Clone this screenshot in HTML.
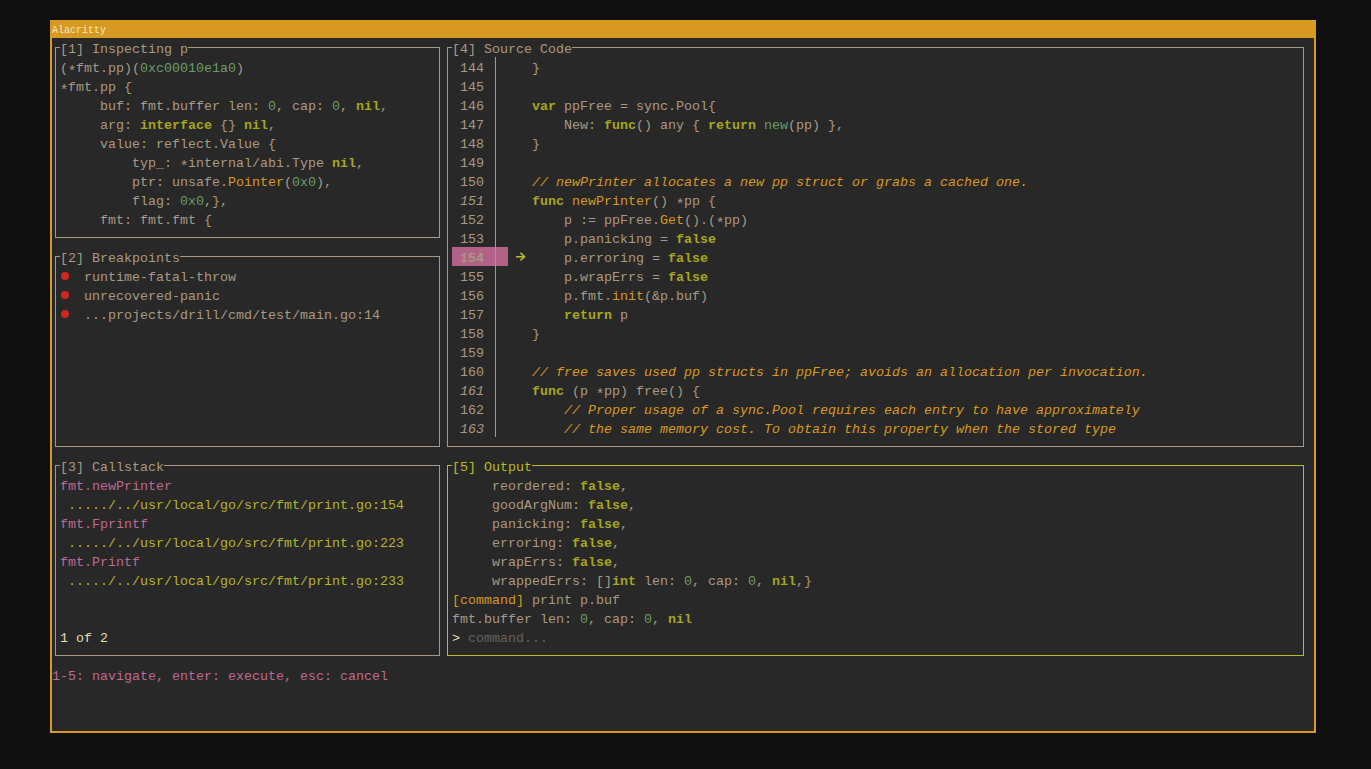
<!DOCTYPE html>
<html><head><meta charset="utf-8"><style>
html,body{margin:0;padding:0;}
body{width:1371px;height:769px;background:#0f0f0f;position:relative;overflow:hidden;font-family:"Liberation Mono",monospace;}
#win{position:absolute;left:50px;top:20px;width:1266px;height:713px;background:#d79921;}
#title{position:absolute;left:52px;top:21px;width:1262px;height:16px;background:#d79921;}
#tt{position:absolute;left:52px;top:24px;height:12px;line-height:12px;font-size:10px;color:#f3e6c6;white-space:pre;transform:scaleY(1.1);transform-origin:0 0;}
#content{position:absolute;left:52px;top:38px;width:1262px;height:693px;background:#282828;}
.dot{position:absolute;width:8px;height:8px;border-radius:50%;background:#d1261f;}
.bl,.yl,.hlb{position:absolute;}
.bl{background:#a89984;}
.yl{background:#b8bb26;}
.hlb{background:#b16286;}
span{position:absolute;white-space:pre;font-size:13.333px;line-height:19px;height:17px;}
.f{color:#a89984;}
.bt{color:#a89984;background:#282828;}
.yt{color:#b8bb26;background:#282828;}
.g{color:#689d6a;}
.k{color:#a6a51c;font-weight:bold;}
.o{color:#d79921;}
.c{color:#d79921;font-style:italic;}
.r{color:#cc241d;}
.p{color:#bd6a92;}
.y{color:#b4b528;}
.w{color:#ebdbb2;}
.gr{color:#646260;}
.ln{color:#a89984;}
.lni{color:#a89984;font-style:italic;}
.lnh{color:#a89984;font-weight:bold;background:transparent;}
.ar{color:#b8bb26;}
.ast{display:inline-block;width:8px;font-weight:inherit;transform:translateY(3px) scale(1.15);}

</style></head><body>
<div id="win"></div><div id="title"></div><div id="tt">Alacritty</div><div id="content"></div>
<div class="bl" style="left:55px;top:47px;width:385px;height:1px"></div><div class="bl" style="left:55px;top:237px;width:385px;height:1px"></div><div class="bl" style="left:55px;top:47px;width:1px;height:191px"></div><div class="bl" style="left:439px;top:47px;width:1px;height:191px"></div><div class="bl" style="left:55px;top:256px;width:385px;height:1px"></div><div class="bl" style="left:55px;top:446px;width:385px;height:1px"></div><div class="bl" style="left:55px;top:256px;width:1px;height:191px"></div><div class="bl" style="left:439px;top:256px;width:1px;height:191px"></div><div class="bl" style="left:55px;top:465px;width:385px;height:1px"></div><div class="bl" style="left:55px;top:655px;width:385px;height:1px"></div><div class="bl" style="left:55px;top:465px;width:1px;height:191px"></div><div class="bl" style="left:439px;top:465px;width:1px;height:191px"></div><div class="bl" style="left:447px;top:47px;width:857px;height:1px"></div><div class="bl" style="left:447px;top:446px;width:857px;height:1px"></div><div class="bl" style="left:447px;top:47px;width:1px;height:400px"></div><div class="bl" style="left:1303px;top:47px;width:1px;height:400px"></div><div class="yl" style="left:447px;top:465px;width:857px;height:1px"></div><div class="yl" style="left:447px;top:655px;width:857px;height:1px"></div><div class="yl" style="left:447px;top:465px;width:1px;height:191px"></div><div class="yl" style="left:1303px;top:465px;width:1px;height:191px"></div>
<div class="hlb" style="left:452px;top:247px;width:56px;height:19px"></div>
<div class="bl" style="left:495px;top:57px;width:1px;height:380px"></div>
<svg style="position:absolute;left:512px;top:248px" width="18" height="18" viewBox="0 0 18 18"><path d="M4 8.7H12.6M8.4 4.9L12.6 8.7L8.4 12.5" fill="none" stroke="#b8bb26" stroke-width="1.6"/></svg>
<div class="dot" style="left:61px;top:272px"></div><div class="dot" style="left:61px;top:291px"></div><div class="dot" style="left:61px;top:310px"></div>
<span class="bt" style="left:60px;top:40px">[1] Inspecting p</span><span class="bt" style="left:452px;top:40px">[4] Source Code</span><span class="bt" style="left:60px;top:249px">[2] Breakpoints</span><span class="bt" style="left:60px;top:458px">[3] Callstack</span><span class="yt" style="left:452px;top:458px">[5] Output</span><span class="f" style="left:60px;top:59px">(<b class="ast">*</b>fmt.pp)(</span><span class="g" style="left:140px;top:59px">0xc00010e1a0</span><span class="f" style="left:236px;top:59px">)</span><span class="f" style="left:60px;top:78px"><b class="ast">*</b>fmt.pp {</span><span class="f" style="left:100px;top:97px">buf: fmt.buffer len: </span><span class="g" style="left:268px;top:97px">0</span><span class="f" style="left:276px;top:97px">, cap: </span><span class="g" style="left:332px;top:97px">0</span><span class="f" style="left:340px;top:97px">, </span><span class="k" style="left:356px;top:97px">nil</span><span class="f" style="left:380px;top:97px">,</span><span class="f" style="left:100px;top:116px">arg: </span><span class="k" style="left:140px;top:116px">interface</span><span class="f" style="left:220px;top:116px">{} </span><span class="k" style="left:244px;top:116px">nil</span><span class="f" style="left:268px;top:116px">,</span><span class="f" style="left:100px;top:135px">value: reflect.Value {</span><span class="f" style="left:132px;top:154px">typ_: <b class="ast">*</b>internal/abi.Type </span><span class="k" style="left:332px;top:154px">nil</span><span class="f" style="left:356px;top:154px">,</span><span class="f" style="left:132px;top:173px">ptr: unsafe.</span><span class="o" style="left:228px;top:173px">Pointer</span><span class="f" style="left:284px;top:173px">(</span><span class="g" style="left:292px;top:173px">0x0</span><span class="f" style="left:316px;top:173px">),</span><span class="f" style="left:132px;top:192px">flag: </span><span class="g" style="left:180px;top:192px">0x0</span><span class="f" style="left:204px;top:192px">,},</span><span class="f" style="left:100px;top:211px">fmt: fmt.fmt {</span><span class="f" style="left:84px;top:268px">runtime-fatal-throw</span><span class="f" style="left:84px;top:287px">unrecovered-panic</span><span class="f" style="left:84px;top:306px">...projects/drill/cmd/test/main.go:14</span><span class="p" style="left:60px;top:477px">fmt.newPrinter</span><span class="y" style="left:68px;top:496px">...../../usr/local/go/src/fmt/print.go:154</span><span class="p" style="left:60px;top:515px">fmt.Fprintf</span><span class="y" style="left:68px;top:534px">...../../usr/local/go/src/fmt/print.go:223</span><span class="p" style="left:60px;top:553px">fmt.Printf</span><span class="y" style="left:68px;top:572px">...../../usr/local/go/src/fmt/print.go:233</span><span class="w" style="left:60px;top:629px">1 of 2</span><span class="p" style="left:52px;top:667px">1-5: navigate, enter: execute, esc: cancel</span><span class="ln" style="left:460px;top:59px">144</span><span class="f" style="left:532px;top:59px">}</span><span class="ln" style="left:460px;top:78px">145</span><span class="ln" style="left:460px;top:97px">146</span><span class="k" style="left:532px;top:97px">var</span><span class="f" style="left:564px;top:97px">ppFree = sync.Pool{</span><span class="ln" style="left:460px;top:116px">147</span><span class="f" style="left:564px;top:116px">New: </span><span class="k" style="left:604px;top:116px">func</span><span class="f" style="left:636px;top:116px">() any { </span><span class="k" style="left:708px;top:116px">return</span><span class="g" style="left:764px;top:116px">new</span><span class="f" style="left:788px;top:116px">(pp) },</span><span class="ln" style="left:460px;top:135px">148</span><span class="f" style="left:532px;top:135px">}</span><span class="ln" style="left:460px;top:154px">149</span><span class="ln" style="left:460px;top:173px">150</span><span class="c" style="left:532px;top:173px">// newPrinter allocates a new pp struct or grabs a cached one.</span><span class="lni" style="left:460px;top:192px">151</span><span class="k" style="left:532px;top:192px">func</span><span class="o" style="left:572px;top:192px">newPrinter</span><span class="f" style="left:652px;top:192px">() <b class="ast">*</b>pp {</span><span class="ln" style="left:460px;top:211px">152</span><span class="f" style="left:564px;top:211px">p := ppFree.</span><span class="o" style="left:660px;top:211px">Get</span><span class="f" style="left:684px;top:211px">().(<b class="ast">*</b>pp)</span><span class="ln" style="left:460px;top:230px">153</span><span class="f" style="left:564px;top:230px">p.panicking = </span><span class="k" style="left:676px;top:230px">false</span><span class="lnh" style="left:460px;top:249px">154</span><span class="f" style="left:564px;top:249px">p.erroring = </span><span class="k" style="left:668px;top:249px">false</span><span class="ln" style="left:460px;top:268px">155</span><span class="f" style="left:564px;top:268px">p.wrapErrs = </span><span class="k" style="left:668px;top:268px">false</span><span class="ln" style="left:460px;top:287px">156</span><span class="f" style="left:564px;top:287px">p.fmt.</span><span class="o" style="left:612px;top:287px">init</span><span class="f" style="left:644px;top:287px">(&amp;p.buf)</span><span class="ln" style="left:460px;top:306px">157</span><span class="k" style="left:564px;top:306px">return</span><span class="f" style="left:620px;top:306px">p</span><span class="ln" style="left:460px;top:325px">158</span><span class="f" style="left:532px;top:325px">}</span><span class="ln" style="left:460px;top:344px">159</span><span class="ln" style="left:460px;top:363px">160</span><span class="c" style="left:532px;top:363px">// free saves used pp structs in ppFree; avoids an allocation per invocation.</span><span class="lni" style="left:460px;top:382px">161</span><span class="k" style="left:532px;top:382px">func</span><span class="f" style="left:572px;top:382px">(p <b class="ast">*</b>pp) free() {</span><span class="ln" style="left:460px;top:401px">162</span><span class="c" style="left:564px;top:401px">// Proper usage of a sync.Pool requires each entry to have approximately</span><span class="lni" style="left:460px;top:420px">163</span><span class="c" style="left:564px;top:420px">// the same memory cost. To obtain this property when the stored type</span><span class="f" style="left:492px;top:477px">reordered: </span><span class="k" style="left:580px;top:477px">false</span><span class="f" style="left:620px;top:477px">,</span><span class="f" style="left:492px;top:496px">goodArgNum: </span><span class="k" style="left:588px;top:496px">false</span><span class="f" style="left:628px;top:496px">,</span><span class="f" style="left:492px;top:515px">panicking: </span><span class="k" style="left:580px;top:515px">false</span><span class="f" style="left:620px;top:515px">,</span><span class="f" style="left:492px;top:534px">erroring: </span><span class="k" style="left:572px;top:534px">false</span><span class="f" style="left:612px;top:534px">,</span><span class="f" style="left:492px;top:553px">wrapErrs: </span><span class="k" style="left:572px;top:553px">false</span><span class="f" style="left:612px;top:553px">,</span><span class="f" style="left:492px;top:572px">wrappedErrs: []</span><span class="k" style="left:612px;top:572px">int</span><span class="f" style="left:644px;top:572px">len: </span><span class="g" style="left:684px;top:572px">0</span><span class="f" style="left:692px;top:572px">, cap: </span><span class="g" style="left:748px;top:572px">0</span><span class="f" style="left:756px;top:572px">, </span><span class="k" style="left:772px;top:572px">nil</span><span class="f" style="left:796px;top:572px">,}</span><span class="o" style="left:452px;top:591px">[command]</span><span class="f" style="left:532px;top:591px">print p.buf</span><span class="f" style="left:452px;top:610px">fmt.buffer len: </span><span class="g" style="left:580px;top:610px">0</span><span class="f" style="left:588px;top:610px">, cap: </span><span class="g" style="left:644px;top:610px">0</span><span class="f" style="left:652px;top:610px">, </span><span class="k" style="left:668px;top:610px">nil</span><span class="w" style="left:452px;top:629px">&gt;</span><span class="gr" style="left:468px;top:629px">command...</span>
</body></html>
